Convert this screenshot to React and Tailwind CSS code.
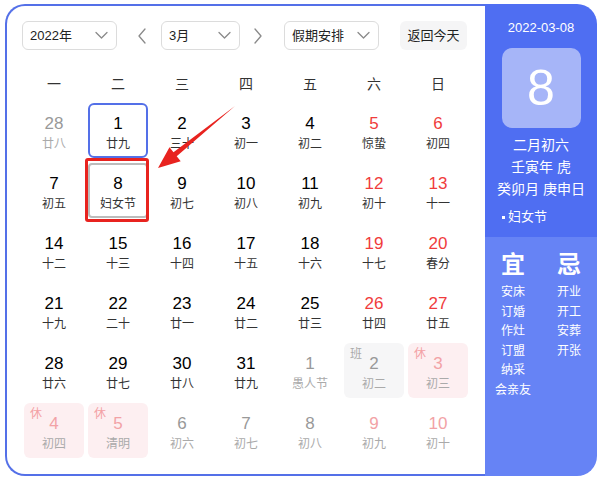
import React from "react";

const RED = "text-[#f03c3c]";

const weeks = ["一", "二", "三", "四", "五", "六", "日"];

// t: n normal, r red, f faded, fr faded red
const days = [
    ["28", "廿八", "f"], ["1", "廿九", "n", "hover"], ["2", "三十", "n"], ["3", "初一", "n"], ["4", "初二", "n"], ["5", "惊蛰", "r"], ["6", "初四", "r"],
    ["7", "初五", "n"], ["8", "妇女节", "n", "today"], ["9", "初七", "n"], ["10", "初八", "n"], ["11", "初九", "n"], ["12", "初十", "r"], ["13", "十一", "r"],
    ["14", "十二", "n"], ["15", "十三", "n"], ["16", "十四", "n"], ["17", "十五", "n"], ["18", "十六", "n"], ["19", "十七", "r"], ["20", "春分", "r"],
    ["21", "十九", "n"], ["22", "二十", "n"], ["23", "廿一", "n"], ["24", "廿二", "n"], ["25", "廿三", "n"], ["26", "廿四", "r"], ["27", "廿五", "r"],
    ["28", "廿六", "n"], ["29", "廿七", "n"], ["30", "廿八", "n"], ["31", "廿九", "n"], ["1", "愚人节", "f"], ["2", "初二", "f", "ban"], ["3", "初三", "fr", "xiu"],
    ["4", "初四", "fr", "xiu"], ["5", "清明", "fr", "xiu"], ["6", "初六", "f"], ["7", "初七", "f"], ["8", "初八", "f"], ["9", "初九", "fr"], ["10", "初十", "fr"],
];

const Chevron = ({dir}) => {
    const d = {
        down: "M1 1.5 L6.5 7 L12 1.5",
        left: "M8 1 L2 8 L8 15",
        right: "M2 1 L8 8 L2 15",
    }[dir];
    const size = dir === "down" ? {w: 13, h: 9} : {w: 10, h: 16};
    return (
        <svg width={size.w} height={size.h} viewBox={`0 0 ${size.w} ${size.h}`} fill="none">
            <path d={d} stroke="#8a8a8a" strokeWidth="1.3" strokeLinecap="round" strokeLinejoin="round"/>
        </svg>
    );
};

const Select = ({label, w}) => (
    <div className={`${w} h-[29px] border border-[#dcdcdc] rounded-[6px] flex items-center justify-between pl-[7px] pr-[8px] text-[13px] text-[#222]`}>
        <span>{label}</span>
        <Chevron dir="down"/>
    </div>
);

function Cell({num, lunar, type, mark}) {
    let numColor = "text-black";
    let lunarColor = "text-[#333]";
    if (type === "r") numColor = RED;
    if (type === "f") {
        numColor = "text-[#999]";
        lunarColor = "text-[#aaa]";
    }
    if (type === "fr") {
        numColor = "text-[#f2a2a6]";
        lunarColor = "text-[#aaa]";
    }
    let box = "";
    if (mark === "hover") box = "border-2 border-[#5470e8] rounded-[6px]";
    if (mark === "today") box = "border-2 border-[#bcbcbc] rounded-[4px]";
    if (mark === "xiu") box = "bg-[#fdeff1] rounded-[6px]";
    if (mark === "ban") box = "bg-[#f6f6f7] rounded-[6px]";
    const inset = mark === "hover" || mark === "today" ? "pt-[9px]" : "pt-[11px]";
    return (
        <div className={`relative h-[55px] flex flex-col items-center ${inset} ${box}`}>
            {mark === "xiu" && <span className="absolute left-[6px] top-[3px] text-[12px] leading-[16px] text-[#f3a0a4]">休</span>}
            {mark === "ban" && <span className="absolute left-[6px] top-[3px] text-[12px] leading-[16px] text-[#aaa]">班</span>}
            <span className={`text-[17px] leading-[20px] ${numColor}`}>{num}</span>
            <span className={`text-[12px] leading-[16px] mt-[2px] ${lunarColor}`}>{lunar}</span>
        </div>
    );
}

export default function App() {
    return (
        <div className="relative w-[603px] h-[482px] bg-white pt-[4px] pl-[5px]"
             style={{fontFamily: '"Liberation Sans", "Noto Sans CJK SC", sans-serif'}}>
            <div className="flex w-[592px] h-[472px]">
                {/* calendar */}
                <div className="w-[480px] h-full border-l-2 border-y-2 border-[#5470e8] rounded-l-[20px] pt-[15px] pl-[15px]">
                    <div className="flex items-center h-[29px]">
                        <Select label="2022年" w="w-[95px]"/>
                        <span className="ml-[20px] w-[10px] flex"><Chevron dir="left"/></span>
                        <div className="ml-[14px]"><Select label="3月" w="w-[79px]"/></div>
                        <span className="ml-[13px] w-[10px] flex"><Chevron dir="right"/></span>
                        <div className="ml-[21px]"><Select label="假期安排" w="w-[95px]"/></div>
                        <button className="ml-[21px] w-[67px] h-[29px] rounded-[6px] bg-[#f5f5f6] text-[13px] text-[#222]">返回今天</button>
                    </div>
                    <div className="ml-[2px] w-[444px]">
                        <div className="grid grid-cols-7 gap-x-[4px] mt-[19px] h-[30px] items-center">
                            {weeks.map(w => (
                                <div key={w} className="text-center text-[14px] text-[#333]">{w}</div>
                            ))}
                        </div>
                        <div className="grid grid-cols-7 gap-x-[4px] gap-y-[5px] mt-[4px]">
                            {days.map((d, i) => (
                                <Cell key={i} num={d[0]} lunar={d[1]} type={d[2]} mark={d[3]}/>
                            ))}
                        </div>
                    </div>
                </div>

                {/* side panel */}
                <div className="w-[112px] h-full rounded-r-[20px] overflow-hidden flex flex-col text-white">
                    <div className="bg-[#4f6ef2] h-[233px] flex flex-col items-center pt-[14px]">
                        <div className="text-[13px] leading-[20px]">2022-03-08</div>
                        <div className="mt-[10px] w-[79px] h-[80px] rounded-[10px] bg-[#a6b5f8] flex items-center justify-center text-[50px] leading-none">8</div>
                        <div className="mt-[6px] text-[14px] leading-[22px] text-center">
                            <div>二月初六</div>
                            <div>壬寅年 虎</div>
                            <div>癸卯月 庚申日</div>
                        </div>
                        <div className="self-start ml-[17px] mt-[7px] flex items-center text-[13px] leading-[20px]">
                            <span className="w-[3px] h-[3px] bg-white"/>
                            <span className="ml-[3px]">妇女节</span>
                        </div>
                    </div>
                    <div className="flex-1 bg-[#6683f5] grid grid-cols-2 pt-[13px]">
                        <div className="flex flex-col items-center">
                            <div className="text-[24px] leading-[30px] font-semibold mb-[3px]">宜</div>
                            {["安床", "订婚", "作灶", "订盟", "纳采", "会亲友"].map(t => (
                                <div key={t} className="text-[12px] leading-[19.5px]">{t}</div>
                            ))}
                        </div>
                        <div className="flex flex-col items-center">
                            <div className="text-[24px] leading-[30px] font-semibold mb-[3px]">忌</div>
                            {["开业", "开工", "安葬", "开张"].map(t => (
                                <div key={t} className="text-[12px] leading-[19.5px]">{t}</div>
                            ))}
                        </div>
                    </div>
                </div>
            </div>

            {/* annotation overlay */}
            <div className="absolute left-[85px] top-[158px] w-[64px] h-[64px] border-[3px] border-[#e8231f] rounded-[3px] pointer-events-none"/>
            <svg className="absolute left-0 top-0 pointer-events-none" width="603" height="482" viewBox="0 0 603 482">
                <polygon points="158,168 169.5,147.2 173.5,152.2 235,106 176.7,156.2 180.7,161.2" fill="#e8231f"/>
            </svg>
        </div>
    );
}
